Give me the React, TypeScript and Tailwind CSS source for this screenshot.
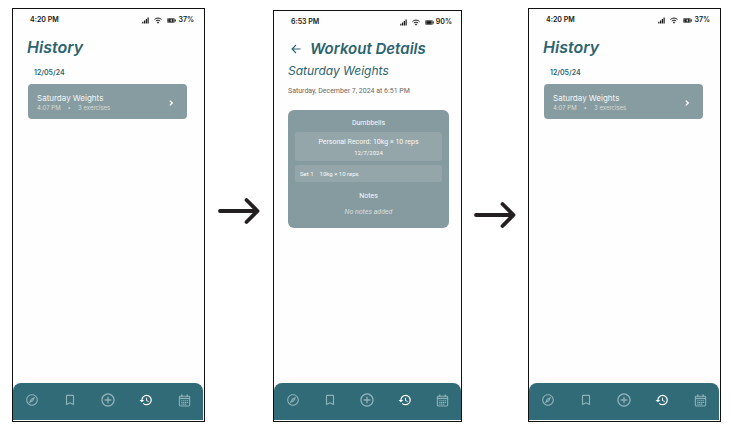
import type { ReactNode } from "react";
import { MdOutlineExplore, MdBookmarkBorder, MdAddCircleOutline, MdHistory } from "react-icons/md";

function SignalIcon() {
  return (
    <svg viewBox="0 0 14 14" className="h-[7px] w-[7px]" fill="currentColor" aria-hidden="true">
      <rect x="0.5" y="9.5" width="2.4" height="3.5" />
      <rect x="4" y="7" width="2.4" height="6" />
      <rect x="7.5" y="4" width="2.4" height="9" />
      <rect x="11" y="1" width="2.4" height="12" />
    </svg>
  );
}

function WifiIcon() {
  return (
    <svg viewBox="0 0 16 14" className="h-[7px] w-2" fill="none" stroke="currentColor" strokeWidth="2" aria-hidden="true">
      <path d="M1 5.2C5 1.2 11 1.2 15 5.2" />
      <path d="M3.6 8.2c2.6-2.4 6.2-2.4 8.8 0" />
      <path d="M6 10.6c1.2-1 2.8-1 4 0L8 12.8z" fill="currentColor" strokeWidth="0.6" />
    </svg>
  );
}

function BatteryIcon({ charging }: { charging: boolean }) {
  return (
    <svg viewBox="0 0 18 10" className="h-[5px] w-[9px]" aria-hidden="true">
      <rect x="0.8" y="0.8" width="14.4" height="8.4" rx="2" fill="none" stroke="currentColor" strokeWidth="1.4" />
      <rect x="2.4" y="2.2" width="11" height="5.6" fill="currentColor" />
      <rect x="16" y="3" width="1.6" height="4" fill="currentColor" />
      {charging && <path d="M9 1 6.5 5.4h1.8L7.6 9l2.8-4.6H8.6z" fill="#fff" />}
    </svg>
  );
}

function CalendarIcon() {
  return (
    <svg viewBox="0 0 24 24" className="h-[13px] w-[13px]" fill="none" stroke="currentColor" aria-hidden="true">
      <rect x="2.5" y="4" width="19" height="18" rx="1.5" strokeWidth="2" />
      <path d="M2.5 8.2h19" strokeWidth="2.4" />
      <path d="M7 1v4M17 1v4" strokeWidth="2.6" />
      <path d="M6 12.5h2.4m1 0h2.4m1 0h2.4m1 0h2.4M6 15.6h2.4m1 0h2.4m1 0h2.4m1 0h2.4M6 18.7h2.4m1 0h2.4m1 0h2.4" strokeWidth="1.9" />
    </svg>
  );
}

function StatusBar({ time, battery, charging = false }: { time: string; battery: string; charging?: boolean }) {
  return (
    <div className="flex h-[22px] items-center justify-between pr-[9px] pl-[17px] text-[7px] font-semibold text-[#161616]">
      <span>{time}</span>
      <div className="flex items-center gap-[5px]">
        <SignalIcon />
        <WifiIcon />
        <div className="flex items-center gap-[2px]">
          <BatteryIcon charging={charging} />
          <span>{battery}</span>
        </div>
      </div>
    </div>
  );
}

function NavBar() {
  return (
    <nav className="mt-auto mb-px grid h-[37px] grid-cols-5 items-center justify-items-center rounded-t-lg bg-[#306b77] pb-[3px] text-[#8fb1b8]">
      <button type="button" aria-label="Explore">
        <MdOutlineExplore className="size-[14px]" />
      </button>
      <button type="button" aria-label="Saved">
        <MdBookmarkBorder className="size-[14px]" />
      </button>
      <button type="button" aria-label="Add workout">
        <MdAddCircleOutline className="size-4" />
      </button>
      <button type="button" aria-label="History" className="text-white">
        <MdHistory className="size-[14px]" />
      </button>
      <button type="button" aria-label="Calendar">
        <CalendarIcon />
      </button>
    </nav>
  );
}

function Phone({ className = "", children }: { className?: string; children: ReactNode }) {
  return (
    <section className={`flex min-w-0 flex-col border border-[#111] bg-[#fefefe] ${className}`}>
      {children}
      <NavBar />
    </section>
  );
}

function HistoryScreen() {
  return (
    <Phone className="pr-px">
      <StatusBar time="4:20 PM" battery="37%" charging />
      <h1 className="mt-1 pl-[14px] text-[16px] leading-6 font-semibold text-[#2c6470] italic">History</h1>
      <h2 className="mt-2 pl-[21px] text-[7px] leading-3 font-semibold text-[#2c6470]">12/05/24</h2>
      <button
        type="button"
        className="mt-[5px] mr-4 ml-[15px] flex items-center justify-between rounded-[4px] bg-[#879ca0] pt-[9px] pr-[14px] pb-[7px] pl-[9px] text-left text-[#f4f7f7]"
      >
        <span className="flex flex-col gap-px">
          <span className="text-[8px] leading-[10px]">Saturday Weights</span>
          <span className="flex gap-[7px] text-[6px] leading-2 text-[#d3dcde]">
            <span>4:07 PM</span>
            <span>•</span>
            <span>3 exercises</span>
          </span>
        </span>
        <svg viewBox="0 0 6 10" className="h-[6px] w-[4px]" fill="none" stroke="#fff" strokeWidth="2.2" aria-hidden="true">
          <path d="M1 1l4 4-4 4" />
        </svg>
      </button>
    </Phone>
  );
}

function DetailsScreen() {
  return (
    <Phone className="mt-[2px]">
      <StatusBar time="6:53 PM" battery="90%" />
      <header className="mt-1 flex items-center gap-[9px] pl-[17px] text-[#2c6470]">
        <button type="button" aria-label="Back">
          <svg viewBox="0 0 20 20" className="size-[10px]" fill="none" stroke="currentColor" strokeWidth="2.2" aria-hidden="true">
            <path d="M19 10H2M10 2l-8 8 8 8" />
          </svg>
        </button>
        <h1 className="text-[15px] leading-6 font-semibold whitespace-nowrap italic">Workout Details</h1>
      </header>
      <h2 className="pl-[14px] text-[12px] leading-5 text-[#2c6470] italic">Saturday Weights</h2>
      <p className="mt-1 pl-[14px] font-['Roboto',sans-serif] text-[7px] leading-3 text-[#666]">
        Saturday, December 7, 2024 at 6:51 PM
      </p>
      <article className="mt-[13px] mr-3 ml-[14px] flex flex-col rounded-md bg-[#869b9f] px-[7px] pt-[7px] pb-[10px] text-center font-['Roboto',sans-serif] text-[7px] leading-3 text-[#f8fafa]">
        <h3>Dumbbells</h3>
        <div className="mt-[3px] rounded-[3px] bg-[#94a6aa] pt-1 pb-[3px]">
          <p>Personal Record: 10kg × 10 reps</p>
          <p className="text-[6px] leading-[10px]">12/7/2024</p>
        </div>
        <div className="mt-1 flex gap-[6px] rounded-[3px] bg-[#94a6aa] px-[5px] pt-[3px] pb-[2px] text-[6px]">
          <span>Set 1</span>
          <span>10kg × 10 reps</span>
        </div>
        <h3 className="mt-2">Notes</h3>
        <p className="mt-1 text-[#d6dfe1] italic">No notes added</p>
      </article>
    </Phone>
  );
}

function FlowArrow({ className = "" }: { className?: string }) {
  return (
    <div className={`flex justify-center ${className}`}>
      <svg viewBox="0 0 42 28" className="h-7 w-[42px]" fill="none" stroke="#231f20" strokeWidth="3.8" strokeLinecap="round" strokeLinejoin="round" aria-hidden="true">
        <path d="M2 14h37M28.5 3l11 11-11 11" />
      </svg>
    </div>
  );
}

export default function App() {
  return (
    <main className="grid min-h-screen grid-cols-[193fr_68fr_189fr_66fr_193fr] bg-white pt-2 pr-[10px] pb-[3px] pl-3 font-['Inter',sans-serif]">
      <HistoryScreen />
      <FlowArrow className="pt-[189px]" />
      <DetailsScreen />
      <FlowArrow className="pt-[193px]" />
      <HistoryScreen />
    </main>
  );
}
